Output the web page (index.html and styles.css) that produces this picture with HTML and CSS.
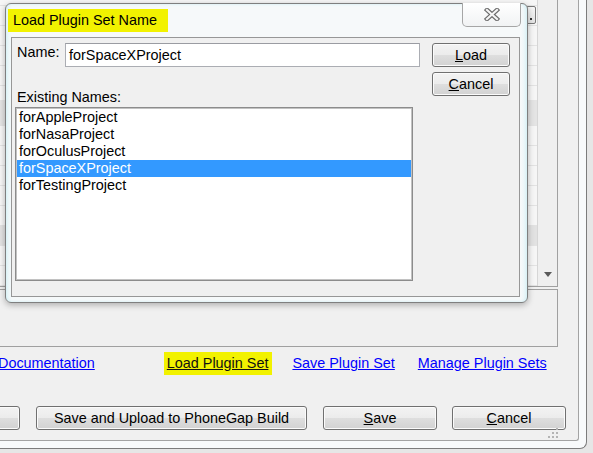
FILE: index.html
```html
<!DOCTYPE html>
<html>
<head>
<meta charset="utf-8">
<link rel="stylesheet" href="styles.css">
</head>
<body>
<div class="screen">
  <div class="window">
    <div class="client">
      <div class="top">
        <div class="grid">
          <span class="cellbtn"><span class="dot"></span></span>
        </div>
        <div class="vscroll"><span class="arrow-down"></span></div>
      </div>
      <div class="panel"></div>
      <div class="links">
        <a class="link doc">Documentation</a>
        <span class="hl"><a class="link dark">Load Plugin Set</a></span>
        <a class="link save">Save Plugin Set</a>
        <a class="link manage">Manage Plugin Sets</a>
      </div>
      <div class="actions">
        <button class="btn stub"></button>
        <button class="btn wide">Save and Upload to PhoneGap Build</button>
        <button class="btn mid"><u>S</u>ave</button>
        <button class="btn mid last"><u>C</u>ancel</button>
      </div>
      <svg class="grip" width="10" height="10" viewBox="0 0 10 10">
        <rect x="8" y="0" width="2" height="2" fill="#b4b4b4"/>
        <rect x="4" y="4" width="2" height="2" fill="#b4b4b4"/>
        <rect x="8" y="4" width="2" height="2" fill="#b4b4b4"/>
        <rect x="0" y="8" width="2" height="2" fill="#b4b4b4"/>
        <rect x="4" y="8" width="2" height="2" fill="#b4b4b4"/>
        <rect x="8" y="8" width="2" height="2" fill="#b4b4b4"/>
      </svg>
    </div>
  </div>

  <div class="dialog">
    <div class="titlebar">
      <span class="title">Load Plugin Set Name</span>
      <span class="close">
        <svg width="16" height="13" viewBox="0 0 16 13">
          <path d="M3 2 L13 11 M13 2 L3 11" stroke="#6c6c6c" stroke-width="4.4" stroke-linecap="square" fill="none"/>
          <path d="M3 2 L13 11 M13 2 L3 11" stroke="#f6f6f6" stroke-width="2.2" stroke-linecap="square" fill="none"/>
        </svg>
      </span>
    </div>
    <div class="content">
      <div class="leftcol">
        <div class="namerow">
          <span class="label">Name:</span>
          <div class="input">forSpaceXProject</div>
        </div>
        <div class="label existing">Existing Names:</div>
        <div class="list">
          <div class="item">forAppleProject</div>
          <div class="item">forNasaProject</div>
          <div class="item">forOculusProject</div>
          <div class="item selected">forSpaceXProject</div>
          <div class="item">forTestingProject</div>
        </div>
      </div>
      <div class="rightcol">
        <button class="btn dbtn"><u>L</u>oad</button>
        <button class="btn dbtn"><u>C</u>ancel</button>
      </div>
    </div>
  </div>
</div>
</body>
</html>
```

FILE: styles.css
```css
* { box-sizing: border-box; }

html, body {
  margin: 0;
  padding: 0;
}

body {
  font-family: "Liberation Sans", Arial, sans-serif;
  font-size: 14.4px;
  color: #000;
}

.screen {
  position: relative;
  width: 593px;
  height: 453px;
  overflow: hidden;
  background: #e6e6e6;
}

/* background main window */
.window {
  width: 587px;
  height: 449px;
  padding: 0 7px 7px 0;
  background: #f8fafb;
  border-right: 1px solid #7c7c7c;
  border-bottom: 1px solid #7c7c7c;
  border-bottom-right-radius: 7px;
}

.client {
  width: 579px;
  height: 441px;
  background: #f0f0f0;
  border-right: 1px solid #a3a3a3;
  border-bottom: 1px solid #a3a3a3;
  border-bottom-right-radius: 3px;
  display: flex;
  flex-direction: column;
}

.top {
  display: flex;
  width: 558px;
  height: 287px;
  border-right: 1px solid #a0a0a0;
  border-bottom: 1px solid #a0a0a0;
}

.grid {
  flex: 1;
  display: flex;
  justify-content: flex-end;
  align-items: flex-start;
  background:
    linear-gradient(to bottom, transparent 0 100px, #e4e4e4 100px 125px, transparent 125px 225px, #e2e2e2 225px 245px, transparent 245px),
    repeating-linear-gradient(to bottom, transparent 0 5px, #e3e3e3 5px 6px, transparent 6px 20px),
    #f6f6f6;
}

.cellbtn {
  width: 10px;
  height: 18px;
  margin-top: 6px;
  margin-right: 1px;
  border: 1px solid #7a7a7a;
  border-radius: 2px;
  background: linear-gradient(#f7f7f7, #e4e4e4);
  display: flex;
  align-items: flex-end;
  padding: 0 0 3px 3px;
}

.dot {
  width: 2px;
  height: 2px;
  background: #333;
}

.vscroll {
  width: 20px;
  background: #efefef;
  border-left: 1px solid #d6d6d6;
  display: flex;
  justify-content: center;
  align-items: flex-end;
  padding-bottom: 9px;
}

.arrow-down {
  width: 0;
  height: 0;
  border-left: 4px solid transparent;
  border-right: 4px solid transparent;
  border-top: 5px solid #5a5a5a;
}

.panel {
  margin-top: 2px;
  margin-left: -1px;
  width: 559px;
  height: 58px;
  border: 1px solid #a0a0a0;
}

.links {
  margin-top: 5px;
  height: 23px;
  display: flex;
  align-items: center;
  line-height: 17px;
}

.link {
  color: #0000ff;
  text-decoration: underline;
  white-space: nowrap;
}

.link.doc { margin-left: -2px; }

.hl {
  margin-left: 69px;
  height: 23px;
  padding: 3px 4px 0 3px;
  background: #f2f200;
}

.link.dark { color: #111; }

.link.save { margin-left: 20px; }

.link.manage { margin-left: 23px; }

.actions {
  margin-top: 31px;
  height: 24px;
  display: flex;
}

.btn {
  font-family: "Liberation Sans", Arial, sans-serif;
  font-size: 14.4px;
  color: #000;
  height: 24px;
  padding: 0;
  border: 1px solid #707070;
  border-radius: 3px;
  background: linear-gradient(to bottom, #f3f3f3 0%, #ececec 48%, #dedede 52%, #d2d2d2 100%);
  box-shadow: inset 0 0 0 1px #fbfbfb;
  line-height: 20px;
  text-align: center;
  white-space: nowrap;
}

.btn u { text-decoration: underline; }

.btn.stub {
  margin-left: -60px;
  width: 80px;
}

.btn.wide {
  margin-left: 16px;
  width: 271px;
}

.btn.mid {
  margin-left: 16px;
  width: 114px;
}

.btn.mid.last { margin-left: 15px; }

.grip {
  align-self: flex-end;
  margin-right: 20px;
  margin-top: -2px;
}

/* dialog */
.dialog {
  position: absolute;
  left: 5px;
  top: 3px;
  width: 523px;
  height: 300px;
  border: 1px solid #7f7f7f;
  border-radius: 6px;
  background: linear-gradient(to right, #e6f5f8 0px, #f6f9fa 6px, #f6f9fa 515px, #e3f3f7 521px);
  box-shadow: 0 2px 6px rgba(0, 0, 0, 0.28), inset 0 0 3px rgba(190, 235, 242, 0.8);
  display: flex;
  flex-direction: column;
}

.titlebar {
  height: 33px;
  display: flex;
  justify-content: space-between;
  align-items: flex-start;
}

.title {
  margin-top: 5px;
  margin-left: 2px;
  height: 23px;
  line-height: 23px;
  padding: 0 11px 0 5px;
  background: #f2f200;
  white-space: nowrap;
}

.close {
  margin-top: -1px;
  margin-right: 6px;
  width: 59px;
  height: 24px;
  border: 1px solid #a6a6a6;
  border-top: none;
  border-radius: 0 0 5px 5px;
  background: linear-gradient(to bottom, #ffffff, #f1f3f4);
  display: flex;
  align-items: center;
  justify-content: center;
}

.content {
  flex: 1;
  margin: 0 7px 5px 5px;
  background: #f0f0f0;
  border: 1px solid #979797;
  display: flex;
  align-items: flex-start;
}

.leftcol {
  width: 408px;
  padding-left: 3px;
  display: flex;
  flex-direction: column;
}

.namerow {
  margin-top: 5px;
  height: 24px;
  display: flex;
  align-items: center;
}

.label {
  line-height: 17px;
  white-space: nowrap;
}

.namerow .label {
  margin-left: 2px;
  width: 48px;
  align-self: flex-start;
  margin-top: 1px;
}

.input {
  width: 355px;
  height: 24px;
  border: 1px solid #abadb3;
  border-top-color: #9a9ca2;
  background: #fff;
  padding: 2px 0 0 3px;
  line-height: 18px;
}

.existing {
  margin-left: 2px;
  margin-top: 22px;
}

.list {
  margin-top: 1px;
  width: 398px;
  height: 174px;
  border: 1px solid #8c8c8c;
  box-shadow: inset 0 0 0 1px #c2c2c2;
  background: #fff;
  padding: 1px;
}

.item {
  height: 17px;
  line-height: 17px;
  padding-left: 2px;
  white-space: nowrap;
}

.item.selected {
  background: #3399ff;
  color: #fff;
}

.rightcol {
  margin-left: 12px;
  margin-top: 5px;
  display: flex;
  flex-direction: column;
  gap: 5px;
}

.btn.dbtn {
  width: 78px;
}
```
